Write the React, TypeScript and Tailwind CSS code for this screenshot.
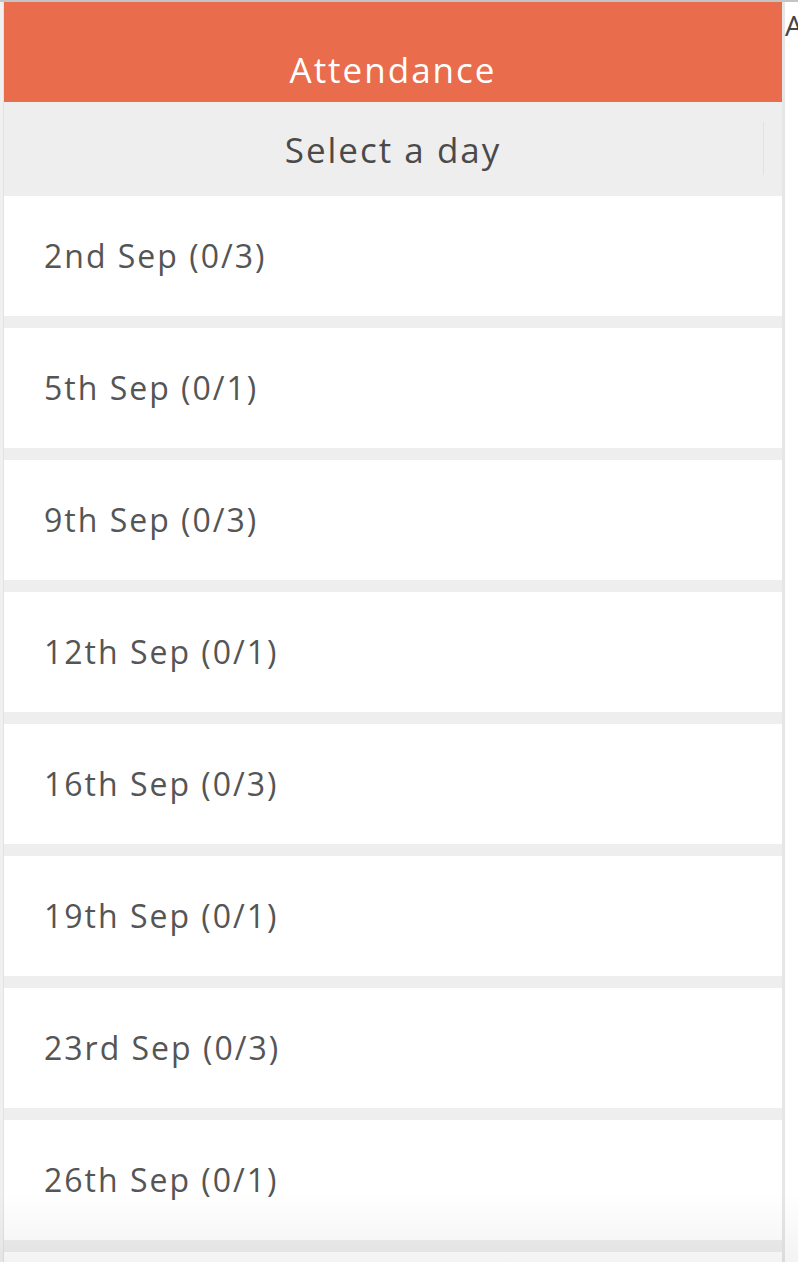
import React from "react"

const days = [
  "2nd Sep (0/3)",
  "5th Sep (0/1)",
  "9th Sep (0/3)",
  "12th Sep (0/1)",
  "16th Sep (0/3)",
  "19th Sep (0/1)",
  "23rd Sep (0/3)",
  "26th Sep (0/1)",
  "30th Sep (0/3)",
]

export default function App() {
  return (
    <div
      className="relative flex h-[1262px] w-[798px] overflow-hidden border-t-2 border-[#c4c4c4] bg-white"
      style={{ fontFamily: "'Open Sans', Lato, sans-serif" }}
    >
      <div className="w-[4px] shrink-0 border-r border-[#e2e2e2] bg-[#f0f0f0]" />

      <div className="flex w-[778px] shrink-0 flex-col bg-[#eeeeee]">
        <div className="flex h-[100px] shrink-0 items-end justify-center bg-[#e96c4c] pb-[15px]">
          <h1 className="text-[35px] leading-none tracking-[2px] text-white">Attendance</h1>
        </div>

        <div className="relative flex h-[94px] shrink-0 items-center justify-center">
          <span className="text-[35px] leading-none tracking-[2px] text-[#4a4a4a]">Select a day</span>
          <div className="absolute right-[18px] top-[20px] h-[53px] w-px bg-[#e2e2e2]" />
        </div>

        <div className="flex flex-col gap-[12px]">
          {days.map((day) => (
            <div key={day} className="flex h-[120px] shrink-0 items-center bg-white pl-[40px]">
              <span className="text-[32px] leading-none tracking-[2px] text-[#555555]">{day}</span>
            </div>
          ))}
        </div>
      </div>

      <div className="w-[3px] shrink-0 bg-[#e6e6e6]" />

      <div className="flex-1 pt-[9px]">
        <span className="text-[28px] leading-none text-[#444]">A</span>
      </div>

      <div className="pointer-events-none absolute bottom-0 left-0 h-[70px] w-full bg-gradient-to-b from-transparent to-[#0000000c]" />
    </div>
  )
}
